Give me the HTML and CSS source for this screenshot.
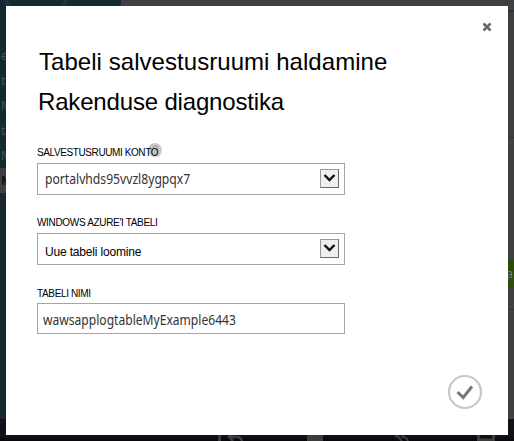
FILE: index.html
```html
<!DOCTYPE html>
<html lang="et">
<head>
<meta charset="utf-8">
<title>Tabeli salvestusruumi haldamine</title>
<link rel="stylesheet" href="styles.css">
</head>
<body>
<div class="page">
  <div class="workspace">
    <nav class="sidebar">
      <svg class="ring" width="121" height="8"><circle cx="36" cy="-11" r="32" fill="none" stroke="#22343a" stroke-width="4"/></svg>
      <span>e</span><span>te</span><span>M</span><span>te</span><span>M</span><span class="selected">M</span>
    </nav>
    <main class="content"><div class="rule"></div><div class="divider upper"></div><div class="save">a</div><div class="divider"></div></main>
  </div>
  <footer class="bar">
    <svg width="514" height="22" fill="none" stroke="#3c3c3f">
      <path d="M219.500 14v8" stroke-width="3"/>
      <path d="M233 14l-4 4 4 4M230 18h7q4 0 5 4" stroke-width="2.500"/>
      <path d="M307 16h16v6h-16z" fill="#3c3c3f" stroke="none"/>
      <path d="M395 18l4-2M401 17.500q6 0 7 5M398 18l4 4" stroke-width="2"/>
      <path d="M478.500 22V12h15v10M478 21h15" stroke-width="3"/>
    </svg>
  </footer>
</div>
<section class="dialog">
  <svg class="close" width="10" height="10" viewBox="0 0 10 10"><path d="M1.500 1.500l7 7M8.500 1.500l-7 7" stroke="#666" stroke-width="2.500"/></svg>
  <h1><span class="t1">Tabeli salvestusruumi haldamine</span></h1>
  <h1><span class="t2">Rakenduse diagnostika</span></h1>
  <div class="field">
    <label><span class="l1">SALVESTUSRUUMI KONTO</span><svg class="help" width="14" height="14" fill="none"><circle cx="7" cy="7" r="7" fill="#c8c8c8"/><path d="M4.500 5.500q0-2.500 2.500-2.500t2.500 2q0 1.500-2.500 3M7 9.500v2" stroke="#b0b0b0" stroke-width="1.600"/></svg></label>
    <div class="box"><span class="v1">portalvhds95vvzl8ygpqx7</span><b class="arrow"><svg width="17" height="17"><path d="M3.500 5l5 5 5-5" fill="none" stroke="#111" stroke-width="2.400"/></svg></b></div>
  </div>
  <div class="field">
    <label><span class="l2">WINDOWS AZURE'I TABELI</span></label>
    <div class="box"><span class="v2">Uue tabeli loomine</span><b class="arrow"><svg width="17" height="17"><path d="M3.500 5l5 5 5-5" fill="none" stroke="#111" stroke-width="2.400"/></svg></b></div>
  </div>
  <div class="field">
    <label><span class="l3">TABELI NIMI</span></label>
    <div class="box text"><span class="v3">wawsapplogtableMyExample6443</span></div>
  </div>
  <svg class="ok" width="36" height="36" viewBox="0 0 36 36" fill="none"><circle cx="18" cy="18" r="16" stroke="#c8c8c8" stroke-width="2.200"/><path d="M10.500 18l5.700 5.500L25 12.500" stroke="#777" stroke-width="3"/></svg>
</section>
</body>
</html>
```
FILE: styles.css
```css
* { box-sizing: border-box; }
body { margin: 0; width: 514px; height: 441px; overflow: hidden; font-family: "Liberation Sans", sans-serif; }
.page { height: 441px; display: flex; flex-direction: column; }
.workspace { height: 419px; display: flex; }
.sidebar { width: 121px; background: #15292f; display: flex; flex-direction: column; overflow: hidden; color: #4b5254; font: 12px/25px "Noto Sans", sans-serif; }
.ring { display: block; flex: none; height: 8px; margin-bottom: 35px; }
.sidebar span { height: 25px; padding-left: 1px; }
.sidebar .selected { background: #3f3f3f; color: #111; font-weight: bold; }
.content { flex: 1; background: #404040; display: flex; flex-direction: column; align-items: flex-end; }
.rule { width: 6px; height: 2px; margin-top: 10px; background: #263846; }
.save { width: 20px; height: 28px; margin-top: 121px; padding-right: 1px; background: #2d4b0b; color: #777; font: 13px/28px "Noto Sans", sans-serif; text-align: right; }
.divider { width: 6px; height: 1px; margin-top: 22px; background: #303030; }
.divider.upper { margin-top: 125px; }
.bar { height: 22px; background: linear-gradient(#111117 75%, #08080b); }
.bar svg { display: block; }
.dialog { position: absolute; left: 6px; top: 6px; width: 502px; height: 429px; background: #fff; padding: 36px 31px 0; }
.close { position: absolute; right: 16px; top: 16px; }
h1 { margin: 0 0 0 2px; height: 40px; font-size: 24px; line-height: 40px; font-weight: normal; color: #000; white-space: nowrap; }
.t1 { letter-spacing: 0.05px; }
.t2 { letter-spacing: -0.17px; margin-left: -1px; }
.field { width: 308px; height: 70px; display: flex; flex-direction: column; }
h1 + .field { margin-top: 24px; }
label { height: 17px; padding-top: 1px; font-size: 10px; line-height: 12px; color: #000; white-space: nowrap; position: relative; }
label span { position: relative; z-index: 1; }
.l1 { letter-spacing: -0.4px; }
.l2 { letter-spacing: -0.33px; }
.l3 { letter-spacing: -0.36px; top: 1px; }
.help { position: absolute; left: 111px; top: -3px; }
.box { height: 32px; border: 1px solid #a5a5a5; padding: 0 5px 0 7px; display: flex; align-items: center; justify-content: space-between; white-space: nowrap; font: 13.5px/30px "Noto Sans", sans-serif; color: #333; }
.box.text { height: 31px; padding-left: 5px; }
.arrow { width: 19px; height: 19px; margin-bottom: 2px; background: #efefef; border: 1px solid; border-color: #999 #666 #666 #999; }
.arrow svg { display: block; }
.v1, .v3 { transform-origin: left center; }
.v1 { transform: scaleX(0.900); }
.v3 { transform: translateY(1px) scaleX(0.895); }
.v2 { font: 12px/30px "Liberation Sans", sans-serif; letter-spacing: -0.17px; color: #000; position: relative; top: 3px; }
.ok { position: absolute; left: 441px; top: 368px; }
```
